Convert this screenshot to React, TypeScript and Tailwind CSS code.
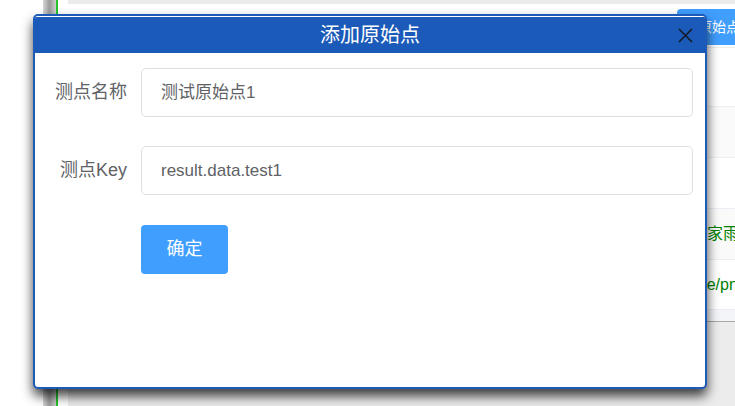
import React from "react";

const font = { fontFamily: '"Liberation Sans", "Noto Sans CJK SC", sans-serif' };

function BackgroundRow({ h, tint, children }: { h: string; tint?: boolean; children?: React.ReactNode }) {
  return (
    <div className={`${h} flex items-center overflow-hidden whitespace-nowrap border-b border-[#ebeef5] ${tint ? "bg-[#fafafa]" : "bg-white"}`}>
      {children}
    </div>
  );
}

function Field({ label, value }: { label: string; value: string }) {
  return (
    <div className="flex items-center">
      <label className="w-[94px] pr-[2px] text-right text-[18px] text-[#606266]">{label}</label>
      <div className="ml-[12px] flex h-[49px] flex-1 items-center rounded-[5px] border border-[#dcdfe6] bg-white pl-[19px] text-[17px] text-[#606266]">
        {value}
      </div>
    </div>
  );
}

export default function App() {
  return (
    <div className="relative flex h-[406px] w-[735px] overflow-hidden bg-white" style={font}>
      <div className="w-[43px] bg-white" />
      <div className="w-[13px] bg-gradient-to-r from-[#d6d6d6] via-[#9c9c9c] to-[#cfcfcf]" />
      <div className="w-[2px] bg-[#25c22e]" />
      <div className="w-[10px] bg-white" />
      <main className="flex min-w-0 flex-1 flex-col">
        <div className="h-[4px] bg-[#ebebeb]" />
        <div className="flex h-[44px] items-start overflow-hidden whitespace-nowrap border-b border-[#ebeef5] bg-white pt-[5px]">
          <button className="ml-[609px] h-[36px] shrink-0 rounded-[4px] bg-[#409eff] pl-[21px] pr-[14px] text-[14px] text-white">原始点</button>
        </div>
        <BackgroundRow h="h-[59px]" />
        <BackgroundRow h="h-[51px]" tint />
        <BackgroundRow h="h-[51px]" />
        <BackgroundRow h="h-[51px]" tint>
          <span className="pl-[623px] text-[16px] text-[#008000]">国家雨量站点</span>
        </BackgroundRow>
        <BackgroundRow h="h-[50px]">
          <span className="pl-[620px] text-[16px] text-[#008000]">/pre/pnt</span>
        </BackgroundRow>
        <div className="h-[12px] border-b border-[#a8a8a8] bg-[#f3f5f9]" />
        <div className="flex-1 bg-[#ececec]" />
      </main>

      <div className="absolute left-[33px] top-[14px] flex h-[375px] w-[674px] flex-col overflow-hidden rounded-[5px] border-2 border-[#1d5bb8] bg-white shadow-[0_7px_12px_rgba(0,0,0,0.75)]">
        <div className="relative flex h-[37px] items-center justify-center border-t border-white bg-[#1b5ab8]">
          <span className="text-[20px] text-white">添加原始点</span>
          <svg className="absolute right-[12px] top-[11px]" width="15" height="15" viewBox="0 0 15 15">
            <path d="M1 1 L14 14 M14 1 L1 14" stroke="#151a22" strokeWidth="1.6" fill="none" />
          </svg>
        </div>
        <div className="flex flex-col pl-0 pr-[12px] pt-[15px]">
          <Field label="测点名称" value="测试原始点1" />
          <div className="h-[29px]" />
          <Field label="测点Key" value="result.data.test1" />
          <div className="ml-[106px] mt-[30px]">
            <button className="h-[49px] w-[87px] rounded-[4px] bg-[#409eff] text-[18px] text-white">确定</button>
          </div>
        </div>
      </div>
    </div>
  );
}
